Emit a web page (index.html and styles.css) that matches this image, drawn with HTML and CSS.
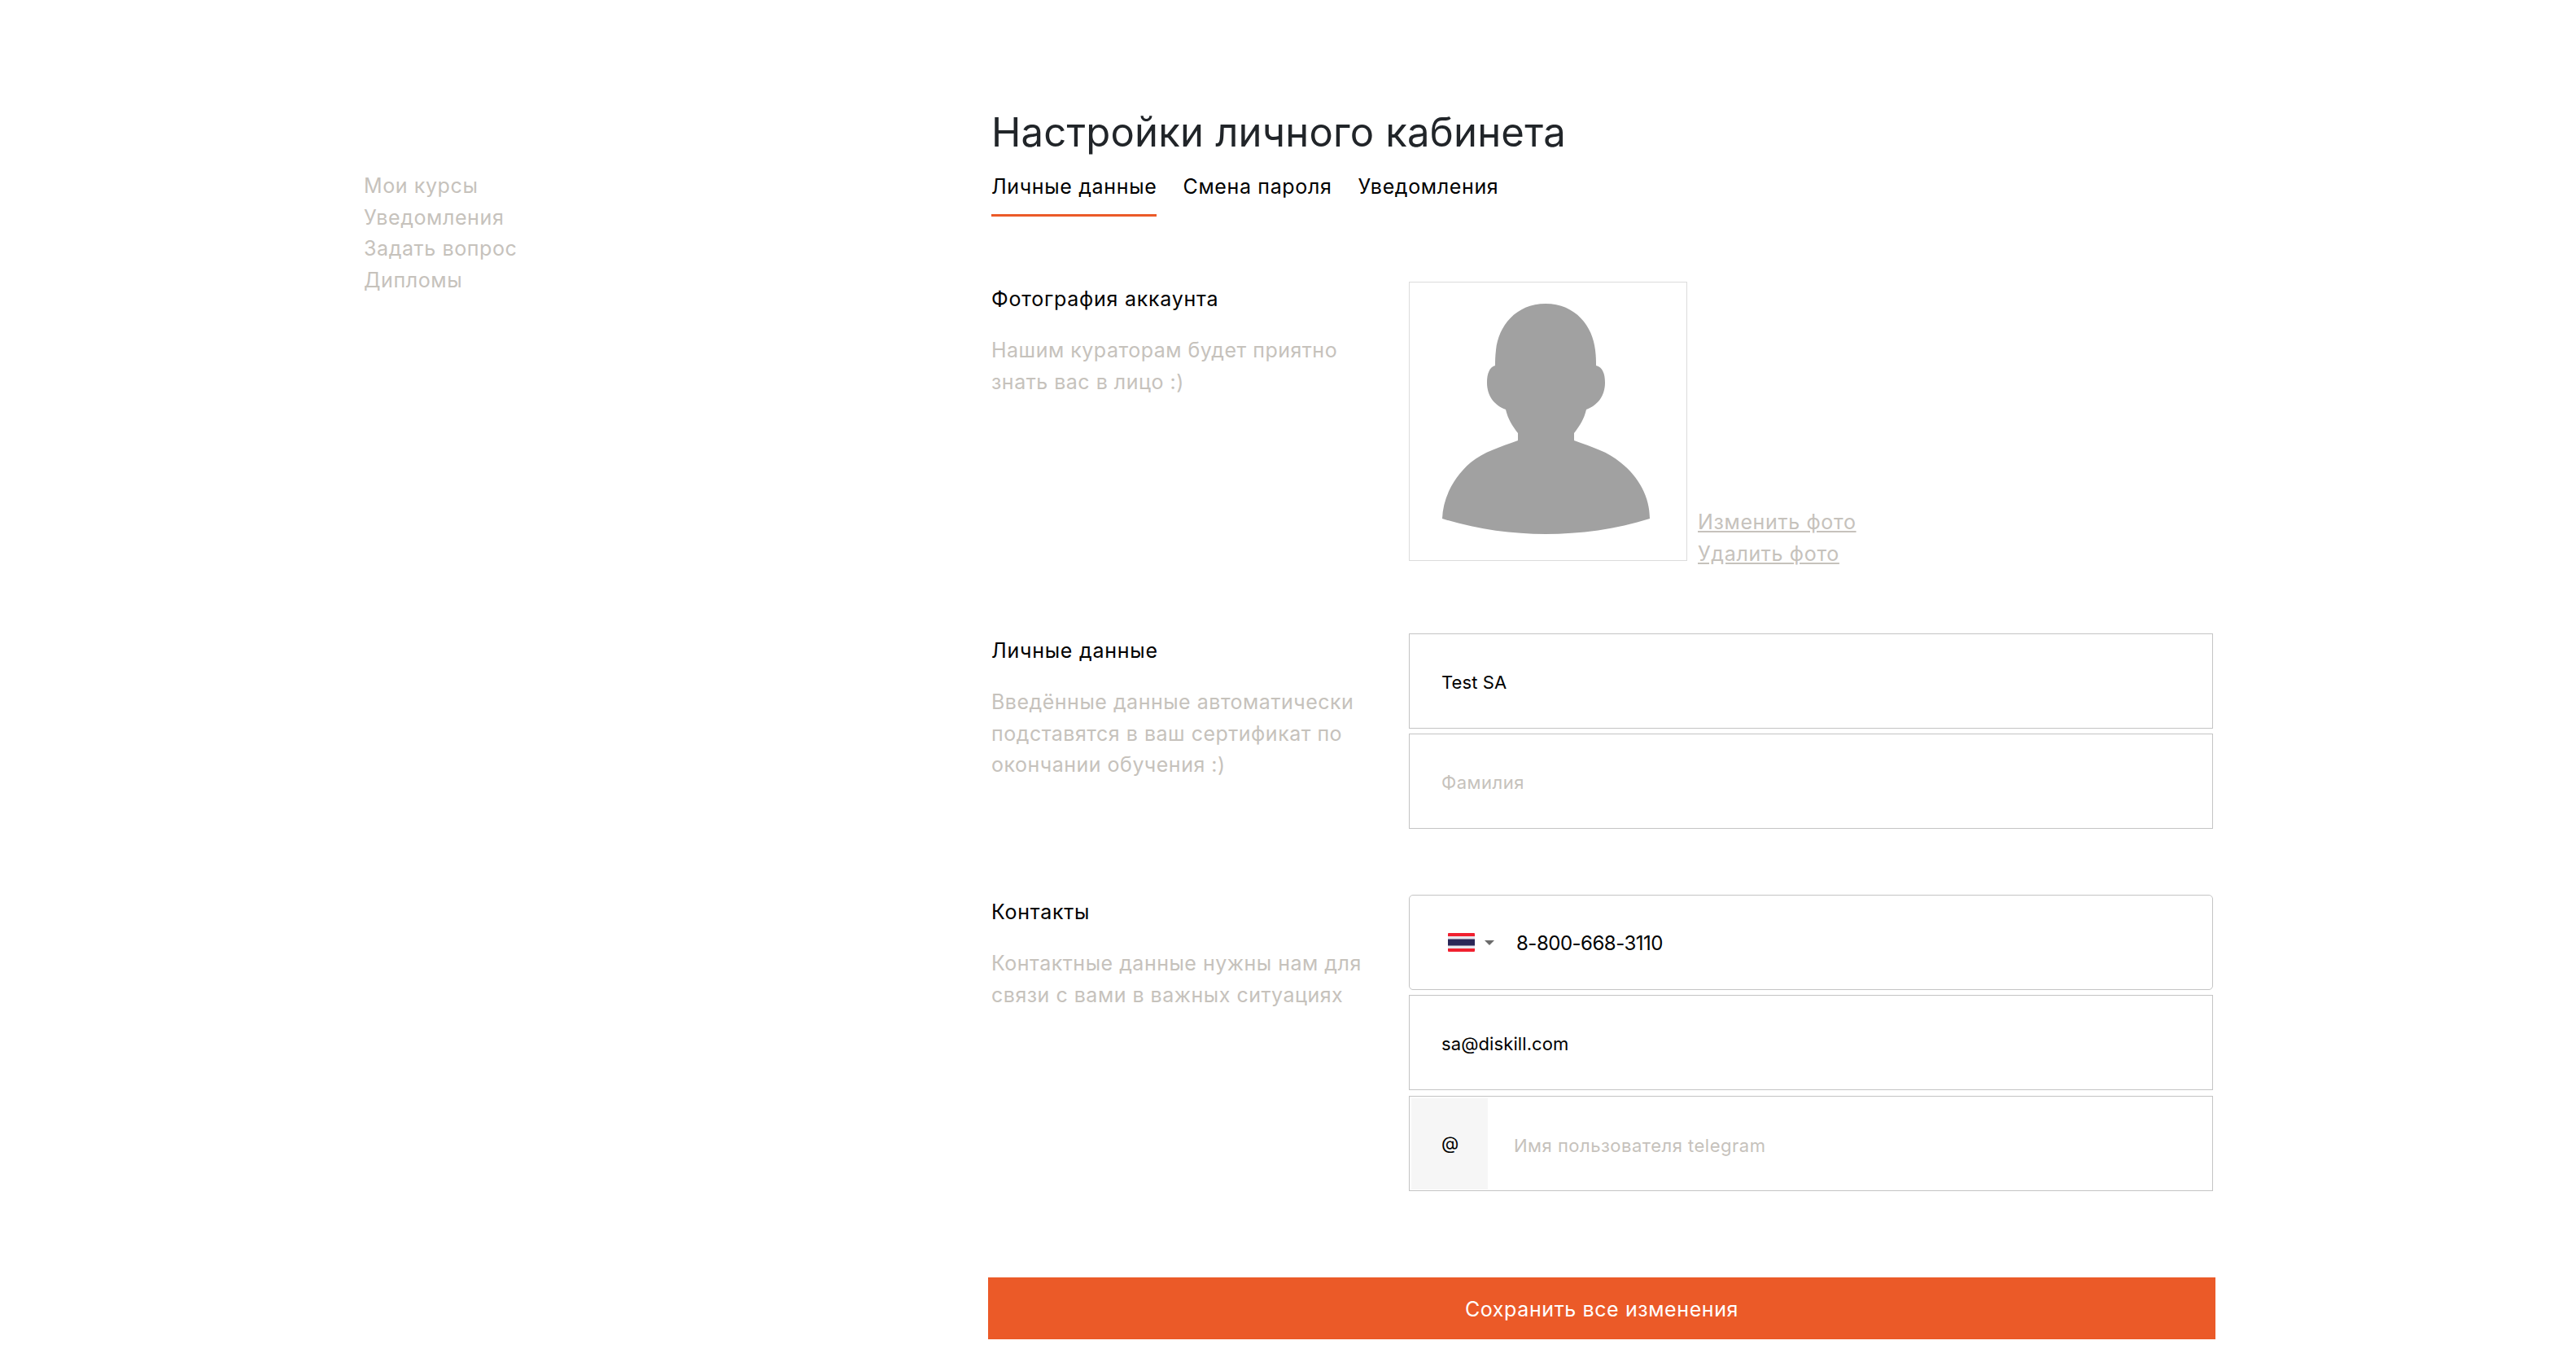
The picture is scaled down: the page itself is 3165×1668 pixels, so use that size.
FILE: index.html
```html
<html>
<head>
    <meta charset="utf-8">
    <link rel="stylesheet" href="styles.css">
</head>
<body>
    <div class="page">
        <ul class="side-menu">
            <li><a>Мои курсы</a></li>
            <li><a>Уведомления</a></li>
            <li><a>Задать вопрос</a></li>
            <li><a>Дипломы</a></li>
        </ul>
        <div class="content">
            <h1 class="title">Настройки личного кабинета</h1>
            <div class="tabs">
                <a class="tab active">Личные данные</a>
                <a class="tab">Смена пароля</a>
                <a class="tab">Уведомления</a>
            </div>
            <form onsubmit="event.preventDefault();" autocomplete="off">
                <div class="section photo-section">
                    <div class="info">
                        <div class="info-title">Фотография аккаунта</div>
                        <div class="info-text">Нашим кураторам будет приятно знать вас в лицо :)</div>
                    </div>
                    <div class="photo-row">
                        <div class="photo">
                            <svg viewBox="0 0 340 341" width="340" height="341">
                                <path fill="#a1a1a1" d="M167 26C204 26 225 54 228 83C229 91 229 97 229 102C237 104 240 112 240 123C240 139 231 151 217 156C214 169 208 177 202 185L202 194C224 202 244 208 259 221C282 239 295 264 295 290C254 303 209 309 167 309C124 309 81 303 40 290C41 264 54 239 75 221C91 208 111 202 133 194L133 185C127 177 121 169 118 156C104 151 95 139 95 123C95 112 98 104 105 102C105 97 105 91 106 83C109 54 130 26 167 26Z"/>
                            </svg>
                        </div>
                        <div class="photo-links">
                            <a>Изменить фото</a>
                            <a>Удалить фото</a>
                        </div>
                    </div>
                </div>
                <div class="section">
                    <div class="info">
                        <div class="info-title">Личные данные</div>
                        <div class="info-text">Введённые данные автоматически подставятся в ваш сертификат по окончании обучения :)</div>
                    </div>
                    <div class="fields">
                        <div class="field"><input type="text" value="Test SA" placeholder="Имя"></div>
                        <div class="field"><input type="text" placeholder="Фамилия"></div>
                    </div>
                </div>
                <div class="section contacts">
                    <div class="info">
                        <div class="info-title">Контакты</div>
                        <div class="info-text">Контактные данные нужны нам для связи с вами в важных ситуациях</div>
                    </div>
                    <div class="fields">
                        <div class="field phone">
                            <div class="country">
                                <svg viewBox="0 0 33 23" width="33" height="23">
                                    <rect width="33" height="23" rx="1" fill="#f0202f"/>
                                    <rect y="4" width="33" height="15" fill="#e8e6ee"/>
                                    <rect y="7.5" width="33" height="8" fill="#2a2657"/>
                                </svg>
                                <span class="arrow"></span>
                            </div>
                            <input type="text" value="8-800-668-3110">
                        </div>
                        <div class="field"><input type="text" value="sa@diskill.com"></div>
                        <div class="field telegram">
                            <span class="at">@</span>
                            <input type="text" placeholder="Имя пользователя telegram">
                        </div>
                    </div>
                </div>
                <input class="save" type="submit" value="Сохранить все изменения">
            </form>
        </div>
    </div>
</body>
</html>
```

FILE: styles.css
```css
body {
    margin: 0;
    padding: 0;
    background: #fff;
    font-family: "Inter", "Liberation Sans", sans-serif;
    color: #000;
}
a {
    cursor: pointer;
}
.page {
    display: flex;
    padding-left: 447px;
}

/* left menu */
.side-menu {
    width: 771px;
    margin: 0;
    padding: 209px 0 0;
    list-style: none;
    font-size: 25px;
    letter-spacing: 0.6px;
    line-height: 38.5px;
    color: #c6c2bc;
}

.content {
    width: 1501px;
}
.title {
    margin: 133px 0 16px;
    font-size: 49px;
    letter-spacing: 0.2px;
    line-height: 60px;
    font-weight: 400;
    color: #212529;
}

/* tabs */
.tabs {
    display: flex;
    gap: 32px;
    margin-bottom: 80px;
}
.tab {
    padding-bottom: 14px;
    border-bottom: 3px solid transparent;
    font-size: 25px;
    letter-spacing: 0.65px;
    line-height: 40px;
}
.tab.active {
    border-bottom-color: #eb5a28;
}

/* form sections */
.section {
    display: flex;
    margin-bottom: 81px;
}
.photo-section {
    margin-bottom: 79px;
}
.contacts {
    margin-bottom: 106px;
}
.info {
    width: 467px;
    margin-right: 46px;
}
.info-title {
    padding-top: 1px;
    font-size: 25px;
    letter-spacing: 0.75px;
    line-height: 40px;
}
.info-text {
    margin-top: 24px;
    font-size: 25px;
    letter-spacing: 0.5px;
    line-height: 38.5px;
    color: #c6c2bc;
}

.photo-row {
    display: flex;
    align-items: flex-end;
    gap: 13px;
}
.photo {
    width: 340px;
    height: 341px;
    margin-bottom: 10px;
    border: 1px solid #dcdcdc;
}
.photo svg {
    display: block;
}
.photo-links {
    display: flex;
    flex-direction: column;
    font-size: 25px;
    letter-spacing: 0.65px;
    line-height: 38.5px;
    color: #c6c2bc;
}
.photo-links a {
    text-decoration: underline;
}

.fields {
    display: flex;
    flex-direction: column;
    gap: 6px;
    width: 988px;
}
.field {
    display: flex;
    align-items: center;
    box-sizing: border-box;
    height: 117px;
    border: 1px solid #c4c4c4;
}
.field input {
    flex: 1;
    box-sizing: border-box;
    min-width: 0;
    height: 100%;
    padding: 3px 0 0 39px;
    border: 0;
    outline: 0;
    background: none;
    font-family: inherit;
    font-size: 22px;
    letter-spacing: 0.1px;
    color: #000;
}
.field input::placeholder {
    color: #c6c2bc;
    opacity: 1;
    letter-spacing: 0.5px;
}

.phone {
    border-radius: 5px;
}
.country {
    display: flex;
    align-items: center;
    gap: 12px;
    margin-left: 47px;
}
.country svg {
    display: block;
}
.arrow {
    border-top: 6px solid #6b6b6b;
    border-left: 6px solid transparent;
    border-right: 6px solid transparent;
}
.phone input {
    padding-left: 27px;
    padding-top: 1px;
    font-size: 24px;
    letter-spacing: -0.5px;
}

.telegram {
    margin-top: 1px;
    padding: 2px 0 1px 2px;
}
.at {
    flex: none;
    box-sizing: border-box;
    width: 94px;
    height: 100%;
    padding-left: 37px;
    background: #f6f6f6;
    font-size: 22px;
    line-height: 111px;
}
.telegram input {
    padding-left: 32px;
}

.save {
    display: block;
    width: 1508px;
    height: 76px;
    margin: 0 0 23px -4px;
    padding-top: 2px;
    border: 0;
    background: #eb5a28;
    color: #fff;
    font-family: inherit;
    font-size: 25px;
    letter-spacing: 0.6px;
    cursor: pointer;
}
```
